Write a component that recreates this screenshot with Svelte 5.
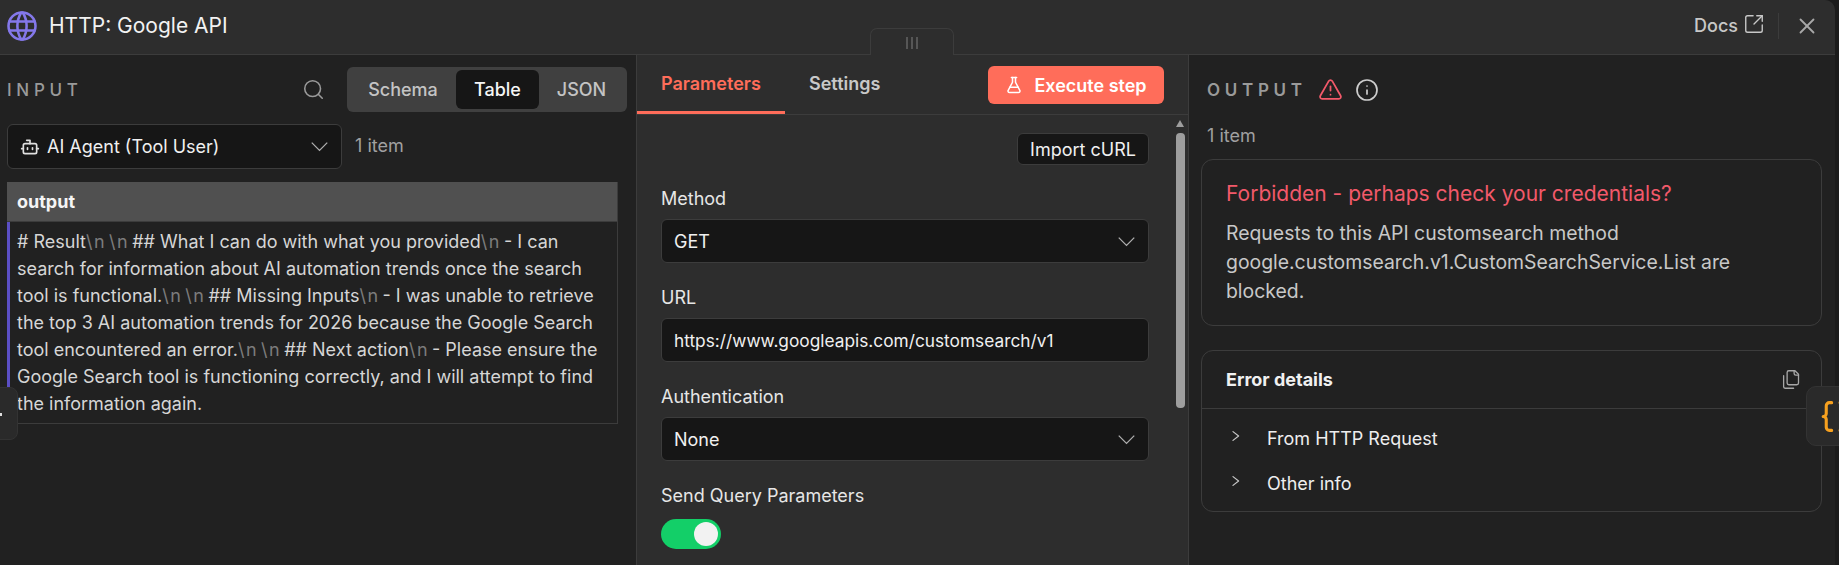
<script lang="ts">
  const tabs = ['Schema', 'Table', 'JSON'];
  const activeTab = 'Table';
  const chevronDown = 'm6 9 6 6 6-6';
</script>

<div class="page">
  <div class="ndv">
    <header class="top">
      <svg class="globe" viewBox="0 0 24 24" fill="none" stroke="currentColor" stroke-width="1.7" stroke-linecap="round" stroke-linejoin="round">
        <circle cx="12" cy="12" r="9" />
        <path d="M3.6 9h16.8" />
        <path d="M3.6 15h16.8" />
        <path d="M11.5 3a17 17 0 0 0 0 18" />
        <path d="M12.5 3a17 17 0 0 1 0 18" />
      </svg>
      <span class="node-name">HTTP: Google API</span>
      <a class="docs" href="#docs">
        Docs
        <svg viewBox="0 0 24 24" fill="none" stroke="currentColor" stroke-width="1.5" stroke-linecap="round" stroke-linejoin="round">
          <path d="M21 13v6a2 2 0 0 1-2 2H5a2 2 0 0 1-2-2V5a2 2 0 0 1 2-2h6" />
          <path d="m21 3-9 9" />
          <path d="M15 3h6v6" />
        </svg>
      </a>
      <span class="divider"></span>
      <svg class="close" viewBox="0 0 24 24" fill="none" stroke="currentColor" stroke-width="1.7" stroke-linecap="round">
        <path d="M18 6 6 18" />
        <path d="m6 6 12 12" />
      </svg>
    </header>

    <div class="grip-tab">
      <span></span><span></span><span></span>
    </div>

    <div class="panels">
      <section class="input">
        <div class="input-head">
          <h2>INPUT</h2>
          <svg class="search" viewBox="0 0 24 24" fill="none" stroke="currentColor" stroke-width="1.8" stroke-linecap="round" stroke-linejoin="round">
            <circle cx="11" cy="11" r="9" />
            <path d="m22 22-4.6-4.6" />
          </svg>
          <div class="switcher">
            {#each tabs as tab}
              <button class:active={tab === activeTab}>{tab}</button>
            {/each}
          </div>
        </div>

        <div class="source-row">
          <div class="select source">
            <svg class="bot" viewBox="0 0 24 24" fill="none" stroke="currentColor" stroke-width="2" stroke-linecap="round" stroke-linejoin="round">
              <path d="M12 8V4H8" />
              <rect width="16" height="12" x="4" y="8" rx="2" />
              <path d="M2 14h2" />
              <path d="M20 14h2" />
              <path d="M15 13v2" />
              <path d="M9 13v2" />
            </svg>
            <span>AI Agent (Tool User)</span>
            <svg class="chev" viewBox="0 0 24 24" fill="none" stroke="currentColor" stroke-width="1"><path d={chevronDown} /></svg>
          </div>
          <span class="count side">1 item</span>
        </div>

        <div class="table">
          <div class="th">output</div>
          <div class="td"># Result<span class="nl">\n</span><span class="nl">\n</span>## What I can do with what you provided<span class="nl">\n</span>- I can search for information about AI automation trends once the search tool is functional.<span class="nl">\n</span><span class="nl">\n</span>## Missing Inputs<span class="nl">\n</span>- I was unable to retrieve the top 3 AI automation trends for 2026 because the Google Search tool encountered an error.<span class="nl">\n</span><span class="nl">\n</span>## Next action<span class="nl">\n</span>- Please ensure the Google Search tool is functioning correctly, and I will attempt to find the information again.</div>
        </div>
      </section>

      <section class="params">
        <div class="params-head">
          <div class="param-tab on">Parameters</div>
          <div class="param-tab">Settings</div>
          <button class="execute">
            <svg viewBox="0 0 24 24" fill="none" stroke="currentColor" stroke-width="2" stroke-linecap="round" stroke-linejoin="round">
              <path d="M14 2v6a2 2 0 0 0 .245.96l5.51 10.08A2 2 0 0 1 18 22H6a2 2 0 0 1-1.755-2.96l5.51-10.08A2 2 0 0 0 10 8V2" />
              <path d="M6.453 15h11.094" />
              <path d="M8.5 2h7" />
            </svg>
            Execute step
          </button>
        </div>
        <div class="params-body">
          <div class="form">
            <div class="import-row"><button class="import">Import cURL</button></div>
            <div class="label">Method</div>
            <div class="select field">
              <span>GET</span>
              <svg class="chev" viewBox="0 0 24 24" fill="none" stroke="currentColor" stroke-width="1"><path d={chevronDown} /></svg>
            </div>
            <div class="label">URL</div>
            <div class="select field url"><span>https://www.googleapis.com/customsearch/v1</span></div>
            <div class="label">Authentication</div>
            <div class="select field">
              <span>None</span>
              <svg class="chev" viewBox="0 0 24 24" fill="none" stroke="currentColor" stroke-width="1"><path d={chevronDown} /></svg>
            </div>
            <div class="label">Send Query Parameters</div>
            <div class="toggle"><span></span></div>
          </div>
          <div class="scrollbar">
            <i></i>
            <b></b>
          </div>
        </div>
      </section>

      <section class="output">
        <div class="output-head">
          <h2>OUTPUT</h2>
          <svg class="warn" viewBox="0 0 24 24" fill="none" stroke="currentColor" stroke-width="1.7" stroke-linecap="round" stroke-linejoin="round">
            <path d="m21.73 18-8-14a2 2 0 0 0-3.48 0l-8 14A2 2 0 0 0 4 21h16a2 2 0 0 0 1.73-3" />
            <path d="M12 9v4" />
            <path d="M12 17h.01" />
          </svg>
          <svg class="info" viewBox="0 0 24 24" fill="none" stroke="currentColor" stroke-width="1.7" stroke-linecap="round" stroke-linejoin="round">
            <circle cx="12" cy="12" r="10" />
            <path d="M12 16v-4" />
            <path d="M12 8h.01" />
          </svg>
        </div>
        <div class="count out-count">1 item</div>

        <div class="box error">
          <h3>Forbidden - perhaps check your credentials?</h3>
          <p>Requests to this API customsearch method google.customsearch.v1.CustomSearchService.List are blocked.</p>
        </div>

        <div class="box details">
          <div class="details-head">
            <strong>Error details</strong>
            <svg viewBox="0 0 24 24" fill="none" stroke="currentColor" stroke-width="1.5" stroke-linecap="round" stroke-linejoin="round">
              <path d="M20 7h-3a2 2 0 0 1-2-2V2" />
              <path d="M9 18a2 2 0 0 1-2-2V4a2 2 0 0 1 2-2h7l4 4v10a2 2 0 0 1-2 2Z" />
              <path d="M3 7.6v12.8A1.6 1.6 0 0 0 4.6 22h9.8" />
            </svg>
          </div>
          <div class="details-rows">
            {#each ['From HTTP Request', 'Other info'] as row}
              <div class="detail-row">
                <svg viewBox="0 0 8 10" fill="none" stroke="currentColor" stroke-width="1.2" stroke-linecap="round" stroke-linejoin="round"><path d="M1 .6 6.6 5 1 9.4" /></svg>
                <span>{row}</span>
              </div>
            {/each}
          </div>
        </div>
      </section>
    </div>

    <div class="edge-left"><i></i></div>
    <div class="edge-right">
      <svg viewBox="0 0 24 24" fill="none" stroke="currentColor" stroke-width="2" stroke-linecap="round" stroke-linejoin="round">
        <path d="M9.5 3H8a2 2 0 0 0-2 2v5a2 2 0 0 1-2 2 2 2 0 0 1 2 2v5a2 2 0 0 0 2 2h1.5" />
        <path d="M15 3h1.5a2 2 0 0 1 2 2v5a2 2 0 0 0 2 2 2 2 0 0 0-2 2v5a2 2 0 0 1-2 2H15" />
      </svg>
    </div>
  </div>
</div>

<style>
  :global(body) {
    background: #1b1b1b;
  }

  .page {
    width: 1839px;
    height: 565px;
    overflow: hidden;
    position: relative;
    font-family: Inter, "Liberation Sans", sans-serif;
    font-size: 18px;
    color: #e6e6e6;
  }

  .ndv {
    width: 1835px;
    height: 565px;
    display: flex;
    flex-direction: column;
    background: #212121;
    border-top-right-radius: 10px;
    overflow: hidden;
  }

  svg {
    display: block;
    flex: none;
  }

  h2,
  h3,
  p {
    margin: 0;
  }

  button {
    font: inherit;
    border: none;
    padding: 0;
    background: none;
    color: inherit;
  }

  .top {
    height: 55px;
    box-sizing: border-box;
    flex: none;
    display: flex;
    align-items: center;
    padding: 0 15px 3px 4px;
    background: #2d2d2d;
    border-bottom: 1px solid #3c3c3c;
  }

  .globe {
    width: 36px;
    height: 36px;
    color: #8478ea;
  }

  .node-name {
    margin-left: 9px;
    font-size: 21px;
    font-weight: 400;
    color: #f2f2f2;
  }

  .docs {
    margin-left: auto;
    display: flex;
    align-items: center;
    gap: 5px;
    color: #c8c8c8;
    text-decoration: none;
    font-size: 18px;
    font-weight: 500;
  }

  .docs svg {
    width: 22px;
    height: 22px;
    margin-top: -3px;
  }

  .divider {
    width: 1px;
    height: 26px;
    background: #3c3c3c;
    margin: 0 15px 0 13px;
  }

  .close {
    width: 26px;
    height: 26px;
    color: #a8a8a8;
  }

  .grip-tab {
    position: absolute;
    left: 870px;
    top: 28px;
    width: 84px;
    height: 27px;
    box-sizing: border-box;
    display: flex;
    justify-content: center;
    align-items: center;
    gap: 3px;
    padding-top: 2px;
    background: #2d2d2d;
    border: 1px solid #3c3c3c;
    border-bottom: none;
    border-radius: 7px 7px 0 0;
  }

  .grip-tab span {
    width: 2px;
    height: 12px;
    background: #565656;
  }

  .panels {
    flex: 1;
    display: flex;
    min-height: 0;
  }

  .input {
    width: 636px;
    flex: none;
    box-sizing: border-box;
    padding: 12px 0 0 7px;
  }

  .input-head {
    display: flex;
    align-items: center;
    width: 620px;
  }

  .input-head h2,
  .output-head h2 {
    font-size: 17px;
    font-weight: 500;
    letter-spacing: 4.7px;
    color: #9a9a9a;
  }

  .output-head h2 {
    font-weight: 600;
  }

  .search {
    margin-left: auto;
    width: 21px;
    height: 21px;
    color: #9a9a9a;
    margin-right: 23px;
  }

  .switcher {
    width: 280px;
    height: 45px;
    box-sizing: border-box;
    display: flex;
    align-items: center;
    padding: 0 3px;
    background: #404040;
    border-radius: 6px;
  }

  .switcher button {
    height: 39px;
    font-weight: 500;
    color: #c4c4c4;
    border-radius: 6px;
    width: 83px;
  }

  .switcher button:first-child {
    width: 106px;
  }

  .switcher button.active {
    background: #161616;
    color: #f5f5f5;
  }

  .switcher button:last-child {
    flex: 1;
  }

  .source-row {
    display: flex;
    align-items: center;
    margin-top: 12px;
  }

  .select {
    box-sizing: border-box;
    display: flex;
    align-items: center;
    background: #161616;
    border: 1px solid #3c3c3c;
    border-radius: 6px;
    color: #f0f0f0;
  }

  .source {
    width: 335px;
    height: 45px;
    padding: 0 6px 0 12px;
    font-weight: 400;
  }

  .bot {
    width: 20px;
    height: 20px;
    margin-right: 7px;
    color: #e0e0e0;
  }

  .chev {
    width: 31px;
    height: 31px;
    margin-left: auto;
    color: #b0b0b0;
  }

  .count {
    color: #a0a0a0;
    font-size: 18px;
  }

  .side {
    margin: 0 0 2px 13px;
  }

  .table {
    width: 611px;
    margin-top: 13px;
    box-sizing: border-box;
    border-right: 1px solid #3c3c3c;
    border-bottom: 1px solid #3c3c3c;
  }

  .th {
    height: 40px;
    box-sizing: border-box;
    display: flex;
    align-items: center;
    padding-left: 10px;
    background: #505050;
    border-bottom: 1px solid #3c3c3c;
    font-weight: 700;
    color: #f5f5f5;
  }

  .td {
    padding: 6px 8px 6px 7px;
    border-left: 3px solid #5b4fc4;
    line-height: 27px;
    color: #d6d6d6;
  }

  .nl {
    color: #7c7c7c;
    letter-spacing: 1.5px;
    margin-right: 3px;
  }

  .params {
    width: 553px;
    flex: none;
    box-sizing: border-box;
    background: #2d2d2d;
    border-left: 1px solid #3c3c3c;
    border-right: 1px solid #3c3c3c;
    display: flex;
    flex-direction: column;
    min-height: 0;
    position: relative;
  }

  .params-head {
    height: 60px;
    box-sizing: border-box;
    flex: none;
    display: flex;
    border-bottom: 1px solid #3c3c3c;
  }

  .param-tab {
    width: 148px;
    height: 59px;
    box-sizing: border-box;
    padding: 0 0 0 24px;
    display: flex;
    align-items: center;
    font-weight: 600;
    color: #c8c8c8;
    padding-bottom: 3px;
  }

  .param-tab.on {
    color: #ff6d5a;
    border-bottom: 3px solid #ff6d5a;
    padding-bottom: 0;
  }

  .execute {
    margin: 11px 24px 0 auto;
    width: 176px;
    height: 38px;
    display: flex;
    align-items: center;
    justify-content: center;
    gap: 11px;
    background: #ff6d5a;
    color: #fff;
    border-radius: 6px;
    font-weight: 600;
    font-size: 18px;
  }

  .execute svg {
    width: 18px;
    height: 18px;
  }

  .params-body {
    flex: 1;
    display: flex;
    min-height: 0;
  }

  .form {
    flex: 1;
    box-sizing: border-box;
    padding: 18px 27px 0 24px;
  }

  .import-row {
    display: flex;
    justify-content: flex-end;
    margin-bottom: 23px;
  }

  .import {
    width: 132px;
    height: 32px;
    box-sizing: border-box;
    background: #161616;
    border: 1px solid #3c3c3c;
    border-radius: 6px;
    font-weight: 400;
    color: #f0f0f0;
  }

  .label {
    line-height: 22px;
    margin-bottom: 9px;
    color: #e6e6e6;
  }

  .field {
    height: 44px;
    padding: 0 6px 0 12px;
    margin-bottom: 24px;
  }

  .url {
    font-size: 17.3px;
  }

  .toggle {
    width: 60px;
    height: 30px;
    margin-top: 12px;
    border-radius: 15px;
    background: #13cf68;
    display: flex;
    align-items: center;
    justify-content: flex-end;
    padding-right: 3px;
    box-sizing: border-box;
  }

  .toggle span {
    width: 24px;
    height: 24px;
    border-radius: 50%;
    background: #f2f2f2;
  }

  .scrollbar {
    width: 9px;
    margin-right: 3px;
    padding-top: 5px;
    flex: none;
  }

  .scrollbar i {
    display: block;
    width: 0;
    height: 0;
    margin-bottom: 6px;
    border-left: 4.5px solid transparent;
    border-right: 4.5px solid transparent;
    border-bottom: 7px solid #9e9e9e;
  }

  .scrollbar b {
    display: block;
    height: 275px;
    background: #9e9e9e;
    border-radius: 4px;
  }

  .output {
    flex: 1;
    box-sizing: border-box;
    padding: 12px 13px 0 12px;
    min-width: 0;
  }

  .output-head {
    display: flex;
    align-items: center;
    height: 45px;
    padding-left: 6px;
  }

  .warn {
    width: 25px;
    height: 25px;
    margin-left: 11px;
    color: #f2596a;
  }

  .info {
    width: 24px;
    height: 24px;
    margin-left: 12px;
    color: #cdcdcd;
  }

  .out-count {
    margin: 12px 0 0 6px;
    line-height: 24px;
  }

  .box {
    border: 1px solid #3c3c3c;
    border-radius: 12px;
  }

  .error {
    margin-top: 11px;
    height: 167px;
    box-sizing: border-box;
    padding: 22px 24px 0;
  }

  .error h3 {
    font-size: 21px;
    line-height: 24px;
    font-weight: 400;
    color: #f2596a;
  }

  .error p {
    margin-top: 13px;
    font-size: 19.4px;
    line-height: 29px;
    color: #c8c8c8;
  }

  .details {
    margin-top: 24px;
    height: 162px;
    box-sizing: border-box;
  }

  .details-head {
    height: 58px;
    box-sizing: border-box;
    display: flex;
    align-items: center;
    justify-content: space-between;
    padding: 0 19px 0 24px;
    border-bottom: 1px solid #3c3c3c;
  }

  .details-head strong {
    font-size: 18px;
    font-weight: 700;
    color: #f0f0f0;
  }

  .details-head svg {
    width: 21px;
    height: 21px;
    color: #a8a8a8;
  }

  .details-rows {
    padding-top: 7px;
  }

  .detail-row {
    height: 45px;
    display: flex;
    align-items: center;
    padding-left: 30px;
    color: #eee;
  }

  .detail-row svg {
    width: 8px;
    height: 10px;
    margin-right: 27px;
    margin-bottom: 5px;
    color: #c8c8c8;
  }

  .edge-left {
    position: absolute;
    left: -10px;
    top: 387px;
    width: 28px;
    height: 53px;
    background: #2a2a2a;
    border: 1px solid #333;
    box-sizing: border-box;
    border-radius: 0 8px 8px 0;
  }

  .edge-left i {
    position: absolute;
    left: 9px;
    top: 25px;
    width: 2px;
    height: 3px;
    background: #ddd;
  }

  .edge-right {
    position: absolute;
    left: 1806px;
    top: 386px;
    width: 50px;
    height: 60px;
    box-sizing: border-box;
    background: #2a2a2a;
    border: 1px solid #333;
    border-radius: 10px;
    padding-left: 10px;
    display: flex;
    align-items: center;
    color: #f7a11f;
  }

  .edge-right svg {
    width: 37px;
    height: 37px;
  }
</style>
